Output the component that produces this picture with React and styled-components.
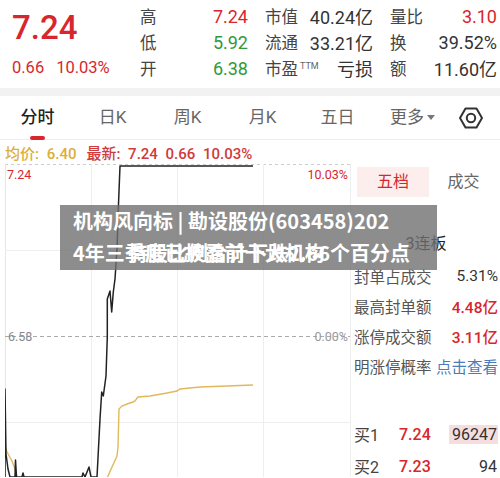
import React from "react";
import styled, { createGlobalStyle } from "styled-components";

const RED = "#d8262c";
const GREEN = "#2f9a3c";
const TEXT = "#444";

const Global = createGlobalStyle`
  html, body { margin: 0; padding: 0; background: #fff; }
  body { font-family: "Roboto", "Noto Sans CJK SC", sans-serif; }
  * { box-sizing: border-box; }
`;

const Page = styled.div`
  position: relative;
  width: 500px;
  height: 478px;
  overflow: hidden;
  background: #fff;
`;

const Header = styled.div`
  display: flex;
  height: 88px;
  padding-top: 3px;
`;

const PriceCol = styled.div`
  width: 128px;
  padding-left: 12px;
  display: flex;
  flex-direction: column;
`;

const BigPrice = styled.div`
  height: 52px;
  line-height: 50px;
  font-size: 33px;
  font-weight: 500;
  color: ${RED};
`;

const Change = styled.div`
  height: 26px;
  line-height: 26px;
  font-size: 16.5px;
  color: ${RED};
  display: flex;
  gap: 12px;
`;

const StatCol = styled.div`
  width: ${(p) => p.$w}px;
  margin-left: ${(p) => p.$ml}px;
  display: flex;
  flex-direction: column;
`;

const StatRow = styled.div`
  height: 26px;
  display: flex;
  align-items: center;
  justify-content: space-between;
`;

const Label = styled.span`
  font-size: 16.5px;
  color: ${TEXT};
  white-space: nowrap;
`;

const Sup = styled.sup`
  font-size: 9px;
  color: #666;
  margin-left: 2px;
  vertical-align: 6px;
`;

const Value = styled.span`
  font-size: 18px;
  color: ${(p) => p.$c || "#333"};
  white-space: nowrap;
`;

const Gap = styled.div`
  height: 8px;
  background: #f2f2f2;
`;

const Tabs = styled.div`
  display: flex;
  align-items: center;
  height: 44px;
  border-bottom: 1px solid #eee;
`;

const Tab = styled.div`
  position: relative;
  width: 75px;
  height: 44px;
  line-height: 43px;
  text-align: center;
  font-size: 17px;
  color: ${(p) => (p.$active ? "#222" : "#666")};
  font-weight: ${(p) => (p.$active ? 500 : 400)};
  &::after {
    content: "";
    display: ${(p) => (p.$active ? "block" : "none")};
    position: absolute;
    left: 30px;
    bottom: 0;
    width: 15px;
    height: 4px;
    border-radius: 2px;
    background: ${RED};
  }
`;

const Caret = styled.span`
  display: inline-block;
  margin-left: 3px;
  width: 0;
  height: 0;
  border-left: 4px solid transparent;
  border-right: 4px solid transparent;
  border-top: 5px solid #777;
  vertical-align: 3px;
`;

const IconWrap = styled.div`
  flex: 1;
  display: flex;
  justify-content: center;
  padding-right: 9px;
`;

const InfoBar = styled.div`
  height: 24px;
  display: flex;
  align-items: center;
  padding-left: 5px;
  font-size: 15px;
  font-weight: 500;
  gap: 10px;
`;

const Info = styled.span`
  color: ${(p) => p.$c};
  white-space: nowrap;
  word-spacing: 4px;
`;

const Body = styled.div`
  display: flex;
  height: 313px;
`;

const Chart = styled.div`
  width: 345px;
  margin-left: 5px;
  height: 313px;
`;

const Side = styled.div`
  width: 150px;
  border-left: 1px solid #eee;
  padding: 3px 2px 0 3px;
  display: flex;
  flex-direction: column;
`;

const SideTabs = styled.div`
  display: flex;
  height: 30px;
  padding-left: 3px;
`;

const SideTab = styled.div`
  width: ${(p) => (p.$active ? "72px" : "auto")};
  flex: ${(p) => (p.$active ? "none" : 1)};
  background: ${(p) => (p.$active ? "#fdeeee" : "transparent")};
  color: ${(p) => (p.$active ? RED : "#666")};
  font-size: 16px;
  line-height: 30px;
  text-align: center;
`;

const Board = styled.div`
  margin-top: 34px;
  height: 26px;
  line-height: 26px;
  text-align: center;
  font-size: 16px;
  color: #222;
`;

const Rows = styled.div`
  margin-top: 4px;
  display: flex;
  flex-direction: column;
`;

const InfoRow = styled.div`
  height: 30px;
  display: flex;
  align-items: center;
  justify-content: space-between;
`;

const RowLabel = styled.span`
  font-size: 15.5px;
  color: #555;
  white-space: nowrap;
`;

const RowValue = styled.span`
  font-size: 15.5px;
  font-weight: ${(p) => (p.$bold ? 500 : 400)};
  color: ${(p) => p.$c || "#333"};
  white-space: nowrap;
`;

const RedLine = styled.div`
  margin-top: 32px;
  height: 2px;
  background: ${RED};
  margin-left: -3px;
  margin-right: -2px;
`;

const Book = styled.div`
  margin-top: 5px;
  display: flex;
  flex-direction: column;
`;

const BookRow = styled.div`
  height: 32px;
  display: grid;
  grid-template-columns: 45px 1fr auto;
  align-items: center;
  font-size: 16px;
`;

const BookLabel = styled.span`
  color: #444;
`;

const BookPrice = styled.span`
  color: ${RED};
  font-weight: 500;
`;

const BookVol = styled.span`
  color: #333;
  text-align: right;
  padding: 0 1px 0 3px;
  background: ${(p) => (p.$hl ? "#f7dede" : "transparent")};
`;

const Overlay = styled.div`
  position: absolute;
  left: 60px;
  top: 205px;
  width: 377px;
  height: 65px;
  background: rgba(112, 112, 112, 0.8);
  color: #fff;
  font-family: "Noto Sans CJK SC", sans-serif;
  font-weight: 700;
  font-size: 20px;
`;

const OverlayLine = styled.div`
  position: relative;
  height: 32px;
  line-height: 31px;
  padding-left: 13px;
  white-space: nowrap;
`;

const Ghost = styled.span`
  position: absolute;
  top: 0;
  ${(p) => (p.$right ? "right: 27px;" : "left: 13px;")}
`;

function Gear() {
  return (
    <svg width="26" height="24" viewBox="0 0 26 24">
      <polygon
        points="2,12 7.5,2.5 18.5,2.5 24,12 18.5,21.5 7.5,21.5"
        fill="none"
        stroke="#333"
        strokeWidth="2"
        strokeLinejoin="round"
      />
      <circle cx="13" cy="12" r="4.2" fill="none" stroke="#333" strokeWidth="2" />
    </svg>
  );
}

const pricePts =
  "0,313 0,225 1,290 3,305 5,313 10,313 10.5,296 11.5,313 17,313 18,309 19,313 77,313 78,309 80,313 84,303 86,313 92,313 95,255 96.7,228 98.3,232 101,212 102.3,173 102.3,135 105,127 106.7,148 108.3,128 110,115 112,85 113.5,40 115,2 248,2";
const avgPts =
  "0,282 2,288 7,297 10,305 12,313 20,330 95,330 103,312 107,303 112,292 113,283 114,245 117,242 122,240 128,238 130,237 133,233 145,232 162,229 172,227 175,225 195,223 222,222 248,221";

function ChartSvg() {
  return (
    <svg width="345" height="313" viewBox="0 0 345 313">
      <line x1="0" y1="0.5" x2="345" y2="0.5" stroke="#ccc" strokeDasharray="3 3" />
      <line x1="0.5" y1="0" x2="0.5" y2="313" stroke="#e6e6e6" />
      {[86, 172, 258].map((x) => (
        <line key={x} x1={x + 0.5} y1="0" x2={x + 0.5} y2="313" stroke="#eee" />
      ))}
      {[86, 258].map((y) => (
        <line key={y} x1="0" y1={y + 0.5} x2="345" y2={y + 0.5} stroke="#eee" />
      ))}
      <line x1="0" y1="172.5" x2="345" y2="172.5" stroke="#aaa" strokeDasharray="4 3" />
      <g fontFamily="Roboto, sans-serif" fontSize="12.5">
        <text x="2" y="14.5" fill={RED}>7.24</text>
        <text x="343" y="14.5" fill={RED} textAnchor="end">10.03%</text>
        <text x="3" y="177" fill="#888">6.58</text>
        <text x="343" y="177" fill="#999" textAnchor="end">0.00%</text>
      </g>
      <polyline points={avgPts} fill="none" stroke="#e2b85c" strokeWidth="1.4" />
      <polyline points={pricePts} fill="none" stroke="#222" strokeWidth="1.5" strokeLinejoin="round" />
    </svg>
  );
}

export default function App() {
  return (
    <Page>
      <Global />
      <Header>
        <PriceCol>
          <BigPrice>7.24</BigPrice>
          <Change>
            <span>0.66</span>
            <span>10.03%</span>
          </Change>
        </PriceCol>
        <StatCol $w={108} $ml={12}>
          <StatRow><Label>高</Label><Value $c={RED}>7.24</Value></StatRow>
          <StatRow><Label>低</Label><Value $c={GREEN}>5.92</Value></StatRow>
          <StatRow><Label>开</Label><Value $c={GREEN}>6.38</Value></StatRow>
        </StatCol>
        <StatCol $w={108} $ml={17}>
          <StatRow><Label>市值</Label><Value>40.24亿</Value></StatRow>
          <StatRow><Label>流通</Label><Value>33.21亿</Value></StatRow>
          <StatRow><Label>市盈<Sup>TTM</Sup></Label><Value>亏损</Value></StatRow>
        </StatCol>
        <StatCol $w={107} $ml={17}>
          <StatRow><Label>量比</Label><Value $c={RED}>3.10</Value></StatRow>
          <StatRow><Label>换</Label><Value>39.52%</Value></StatRow>
          <StatRow><Label>额</Label><Value>11.60亿</Value></StatRow>
        </StatCol>
      </Header>
      <Gap />
      <Tabs>
        <Tab $active>分时</Tab>
        <Tab>日K</Tab>
        <Tab>周K</Tab>
        <Tab>月K</Tab>
        <Tab>五日</Tab>
        <Tab>更多<Caret /></Tab>
        <IconWrap><Gear /></IconWrap>
      </Tabs>
      <InfoBar>
        <Info $c="#dcae3c">均价: 6.40</Info>
        <Info $c="#cf3a3c">最新: 7.24 0.66 10.03%</Info>
      </InfoBar>
      <Body>
        <Chart>
          <ChartSvg />
        </Chart>
        <Side>
          <SideTabs>
            <SideTab $active>五档</SideTab>
            <SideTab>成交</SideTab>
          </SideTabs>
          <Board>3连板</Board>
          <Rows>
            <InfoRow><RowLabel>封单占成交</RowLabel><RowValue>5.31%</RowValue></InfoRow>
            <InfoRow><RowLabel>最高封单额</RowLabel><RowValue $c={RED} $bold>4.48亿</RowValue></InfoRow>
            <InfoRow><RowLabel>涨停成交额</RowLabel><RowValue $c={RED} $bold>3.11亿</RowValue></InfoRow>
            <InfoRow><RowLabel>明涨停概率</RowLabel><RowValue $c="#4a7db8">点击查看</RowValue></InfoRow>
          </Rows>
          <RedLine />
          <Book>
            <BookRow><BookLabel>买1</BookLabel><BookPrice>7.24</BookPrice><BookVol $hl>96247</BookVol></BookRow>
            <BookRow><BookLabel>买2</BookLabel><BookPrice>7.23</BookPrice><BookVol>94</BookVol></BookRow>
          </Book>
        </Side>
      </Body>
      <Overlay>
        <OverlayLine>机构风向标 | 勘设股份(603458)202</OverlayLine>
        <OverlayLine>
          <Ghost>4年三季度已披露前十大机构</Ghost>
          <Ghost $right>持股比例合计下跌2.66个百分点</Ghost>
        </OverlayLine>
      </Overlay>
    </Page>
  );
}
